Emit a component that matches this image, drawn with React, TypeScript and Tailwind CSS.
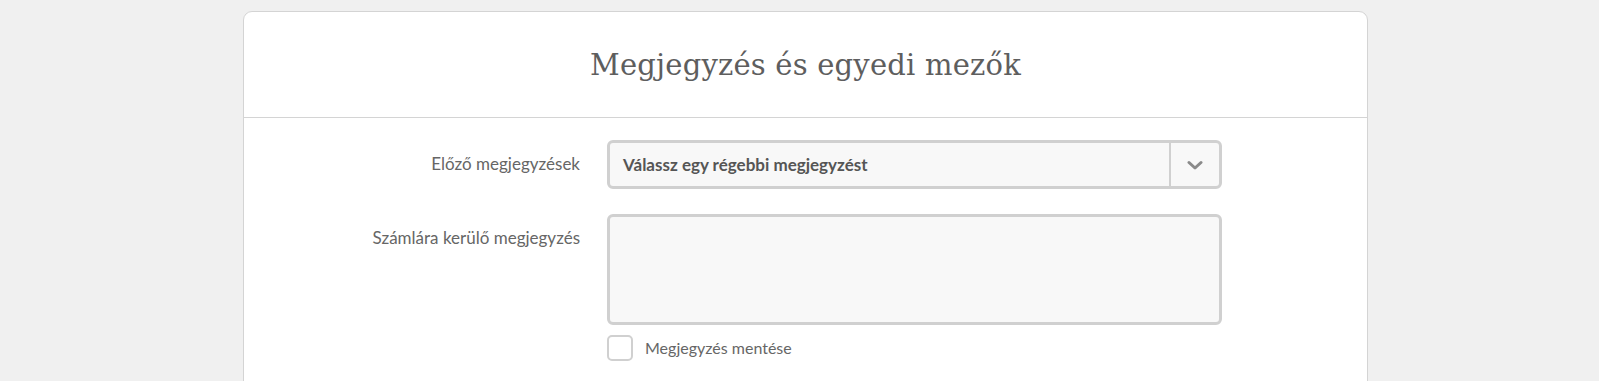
export default function App() {
  return (
    <div className="min-h-screen bg-[#f0f0f0] pt-[11px] pl-[243px]" style={{ fontFamily: "Lato, 'Open Sans', sans-serif" }}>
      <div className="w-[1125px] h-[400px] rounded-t-[9px] border border-[#d4d4d4] bg-white">
        {/* Header */}
        <div className="flex h-[106px] items-center justify-center border-b border-[#d4d4d4]">
          <h2
            className="pt-[2px] text-[29px] font-light tracking-[0.2px] text-[#5e5e5e]"
            style={{ fontFamily: "'DejaVu Serif', 'Liberation Serif', serif" }}
          >
            Megjegyzés és egyedi mezők
          </h2>
        </div>

        {/* Form */}
        <div className="grid grid-cols-[336px_615px] gap-x-[27px] pt-[22px]">
          <label className="pt-[12px] text-right text-[17px] leading-6 text-[#666]">Előző megjegyzések</label>
          <div className="flex h-[49px] rounded-[6px] border-[3px] border-[#d0d0d0] bg-[#f8f8f8]">
            <div className="flex flex-1 items-center pl-[13px] text-[17px] font-bold text-[#555]">
              Válassz egy régebbi megjegyzést
            </div>
            <div className="flex w-[50px] items-center justify-center border-l-2 border-[#d0d0d0]">
              <svg width="16" height="10" viewBox="0 0 16 10" fill="none">
                <path d="M2 2.5 L8 8 L14 2.5" stroke="#8a8a8a" strokeWidth="3" strokeLinecap="round" strokeLinejoin="round" />
              </svg>
            </div>
          </div>

          <label className="mt-[25px] pt-[12px] text-right text-[17px] leading-6 text-[#666]">Számlára kerülő megjegyzés</label>
          <div className="mt-[25px] flex flex-col">
            <textarea className="h-[111px] resize-none rounded-[6px] border-[3px] border-[#d0d0d0] bg-[#f8f8f8] outline-none" />
            <label className="mt-[10px] flex items-center gap-[12px] text-[16px] text-[#666]">
              <span className="h-[26px] w-[26px] rounded-[5px] border-2 border-[#d0d0d0] bg-white" />
              Megjegyzés mentése
            </label>
          </div>
        </div>
      </div>
    </div>
  );
}
